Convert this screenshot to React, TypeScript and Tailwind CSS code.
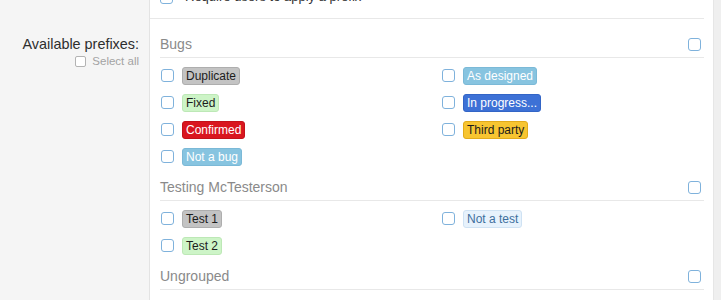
import React from "react";

type Badge = { label: string; cls: string };

const Box = ({ className = "" }: { className?: string }) => (
  <span
    className={
      "inline-block w-[13px] h-[13px] shrink-0 rounded-[3px] border-[1.5px] border-[#7fb2dc] bg-white " +
      className
    }
  />
);

const gray = "bg-[#c3c3c3] border-[#aeaeae] text-[#1c1c1c]";
const green = "bg-[#cdf4c7] border-[#bde8b6] text-[#1c1c1c]";
const red = "bg-[#d9161f] border-[#c3121a] text-white";
const lblue = "bg-[#87c4e0] border-[#7bb9d7] text-white";
const blue = "bg-[#3d71d6] border-[#3365c6] text-white";
const yellow = "bg-[#f7c531] border-[#e2ab1b] text-[#1c1c1c]";
const pale = "bg-[#e7f2fc] border-[#cfe2f3] text-[#3e6f9d]";

const groups: { title: string; items: Badge[] }[] = [
  {
    title: "Bugs",
    items: [
      { label: "Duplicate", cls: gray },
      { label: "As designed", cls: lblue },
      { label: "Fixed", cls: green },
      { label: "In progress...", cls: blue },
      { label: "Confirmed", cls: red },
      { label: "Third party", cls: yellow },
      { label: "Not a bug", cls: lblue },
    ],
  },
  {
    title: "Testing McTesterson",
    items: [
      { label: "Test 1", cls: gray },
      { label: "Not a test", cls: pale },
      { label: "Test 2", cls: green },
    ],
  },
  { title: "Ungrouped", items: [] },
];

export default function App() {
  return (
    <div className="w-[721px] h-[300px] overflow-hidden flex bg-[#f5f5f5] font-['Liberation_Sans',Arial,sans-serif]">
      <div className="w-[150px] shrink-0 border-r border-[#e3e3e3] pt-[36px] pr-[10px] flex flex-col items-end">
        <div className="text-[14.4px] leading-[16px] text-[#2e2e2e]">Available prefixes:</div>
        <div className="mt-[3px] flex items-center gap-[6px] h-[13px]">
          <span className="inline-block w-[11px] h-[11px] rounded-[2px] border border-[#b3b3b3] bg-white" />
          <span className="text-[11.5px] leading-[13px] text-[#a3a3a3]">Select all</span>
        </div>
      </div>
      <div className="w-[563px] shrink-0 bg-white pr-[9px]">
        <div className="-mt-[19px] h-[38px] border-b border-[#e8e8e8] pl-[10px] pt-[9px] flex items-start gap-[12px]">
          <Box className="mt-[1px]" />
          <span className="text-[13px] leading-[13px] text-[#333]">Require users to apply a prefix</span>
        </div>
        <div className="pl-[10px] pt-[8px]">
          {groups.map((g) => (
            <div key={g.title}>
              <div className="h-[31px] border-b border-[#e8e8e8] flex items-center justify-between pt-[4px] pr-[3px]">
                <span className="text-[14px] leading-[16px] text-[#8a8a8a]">{g.title}</span>
                <Box />
              </div>
              {g.items.length > 0 && (
                <div className="pt-[4px] grid grid-cols-[281px_1fr]">
                  {g.items.map((it) => (
                    <div key={it.label} className="h-[27px] flex items-center gap-[8px] pl-[1px]">
                      <Box />
                      <span
                        className={
                          "inline-block border rounded-[3px] px-[3px] text-[12px] leading-[16px] " + it.cls
                        }
                      >
                        {it.label}
                      </span>
                    </div>
                  ))}
                </div>
              )}
            </div>
          ))}
        </div>
      </div>
      <div className="flex-1 bg-[#efefef] border-l border-[#e6e6e6]" />
    </div>
  );
}
